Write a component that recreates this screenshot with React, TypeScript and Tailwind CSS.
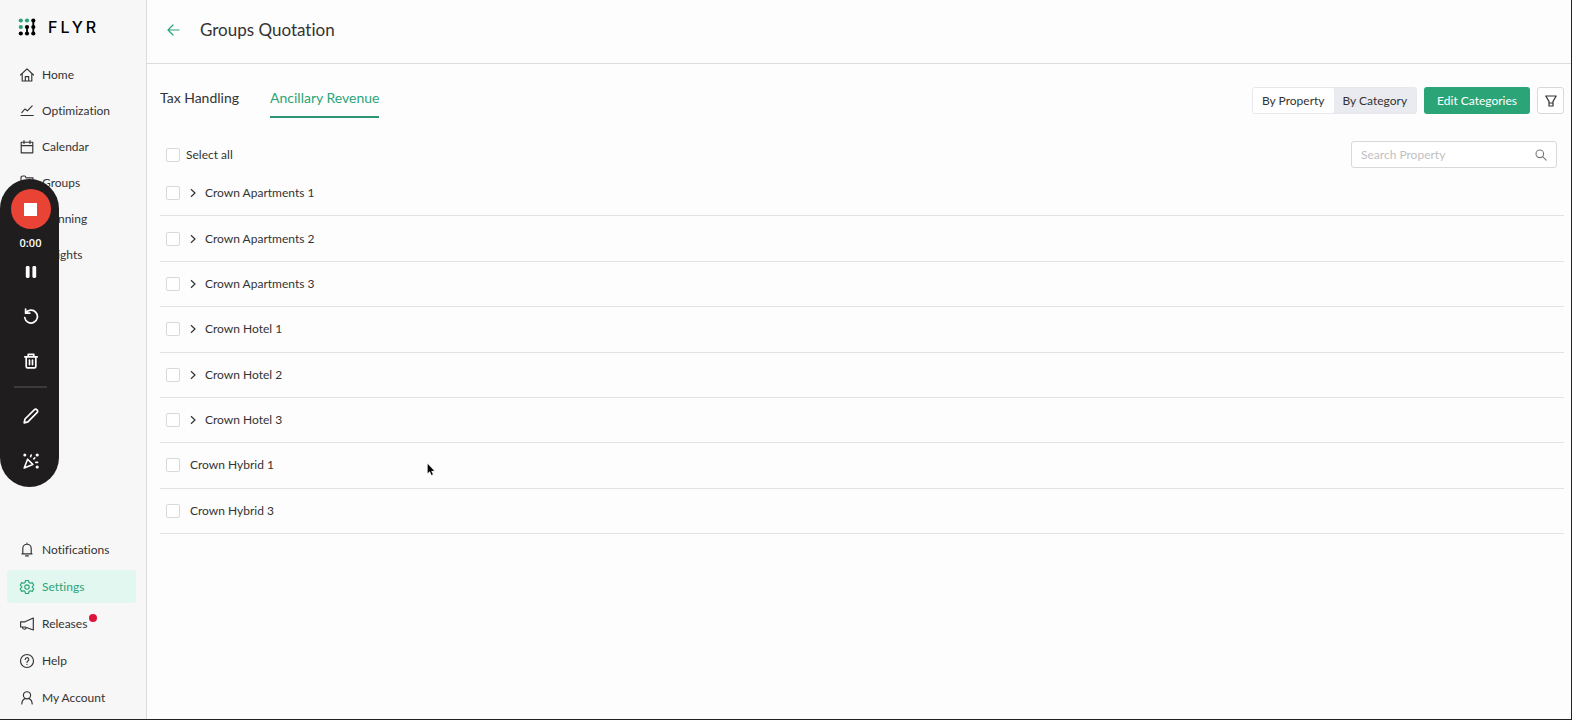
import { type ReactNode, useState } from 'react';

type NavItem = {
    label: string;
    icon: ReactNode;
    active?: boolean;
    badge?: boolean;
};

type Property = {
    name: string;
    expandable: boolean;
};

function LineIcon({ children }: { children: ReactNode }) {
    return (
        <svg viewBox="0 0 16 16" className="size-4 shrink-0" fill="none" stroke="currentColor" strokeWidth="1.15" strokeLinejoin="round" strokeLinecap="round" aria-hidden="true">
            {children}
        </svg>
    );
}

const mainNav: NavItem[] = [
    {
        label: 'Home',
        icon: <LineIcon><path d="M1.5 8 8 1.9 14.5 8M3.2 6.8v7.2h9.6V6.8M6.3 14V9.6h3.4V14" /></LineIcon>,
    },
    {
        label: 'Optimization',
        icon: <LineIcon><path d="M2 12.5h12.3M2.8 9.6l3-3.6 2.6 1.8 4.8-5" /></LineIcon>,
    },
    {
        label: 'Calendar',
        icon: <LineIcon><path d="M2.2 3.2h11.6v10.6H2.2zM2.2 6.6h11.6M5 1.6v3M11 1.6v3" /></LineIcon>,
    },
    {
        label: 'Groups',
        icon: <LineIcon><path d="M2 13.5V3Q2 1 4 1h1.6q1 0 1.4 1.800h7v10.700z" /></LineIcon>,
    },
    {
        label: 'Planning',
        icon: <LineIcon><path d="M2 2v12h12M5 11V8M8.5 11V5M12 11V7" /></LineIcon>,
    },
    {
        label: 'Insights',
        icon: <LineIcon><path d="M2 2v12h12M4 10l3-3 2 2 4-5" /></LineIcon>,
    },
];

const footerNav: NavItem[] = [
    {
        label: 'Notifications',
        icon: <LineIcon><path d="M8 1v1.2M3.8 11.8V6.4a4.2 4.2 0 0 1 8.4 0v5.4M2.9 11.8h10.2M6.6 13.9h2.8" /></LineIcon>,
    },
    {
        label: 'Settings',
        active: true,
        icon: (
            <LineIcon>
                <path d="M6.5 1.5h3l.5 2 1.3.8 2-.7 1.5 2.6-1.5 1.4v.8l1.5 1.4-1.5 2.6-2-.7-1.3.8-.5 2h-3l-.5-2-1.3-.8-2 .7-1.5-2.6 1.5-1.4v-.8L1.2 6.2l1.5-2.6 2 .7L6 3.5z" />
                <circle cx="8" cy="8" r="2.2" />
            </LineIcon>
        ),
    },
    {
        label: 'Releases',
        badge: true,
        icon: <LineIcon><path d="M14.3 2v12L6 11H1.6V5.8H6zM3.2 11q.4 2.2 2.4 2.2 1.3 0 1.6-1.6" /></LineIcon>,
    },
    {
        label: 'Help',
        icon: (
            <LineIcon>
                <circle cx="8" cy="8" r="6.5" />
                <path d="M6.2 6.5a1.8 1.8 0 1 1 2.6 1.6Q8 8.5 8 9.4M8 11.3v.1" />
            </LineIcon>
        ),
    },
    {
        label: 'My Account',
        icon: (
            <LineIcon>
                <circle cx="8" cy="5.3" r="3.6" />
                <path d="M2.8 14q.2-4.400 3.600-5.600M13.200 14q-.2-4.400-3.600-5.600" />
            </LineIcon>
        ),
    },
];

const properties: Property[] = [
    { name: 'Crown Apartments 1', expandable: true },
    { name: 'Crown Apartments 2', expandable: true },
    { name: 'Crown Apartments 3', expandable: true },
    { name: 'Crown Hotel 1', expandable: true },
    { name: 'Crown Hotel 2', expandable: true },
    { name: 'Crown Hotel 3', expandable: true },
    { name: 'Crown Hybrid 1', expandable: false },
    { name: 'Crown Hybrid 3', expandable: false },
];

const checkboxClass = 'size-[14px] shrink-0 appearance-none rounded-[2px] border border-[#d9d9db] bg-white checked:border-[#2ba578] checked:bg-[#2ba578]';

function NavLink({ item }: { item: NavItem }) {
    return (
        <a
            href="#"
            aria-current={item.active ? 'page' : undefined}
            className={
                item.active
                    ? 'flex h-[33px] items-center gap-[7px] rounded-[3px] bg-[#e2f7f0] pl-3 text-[#2ba578]'
                    : 'flex h-[33px] items-center gap-[7px] rounded-[3px] pl-3 text-[#333]'
            }
        >
            {item.icon}
            <span className="relative">
                {item.label}
                {item.badge && <span className="absolute top-0 -right-[10px] size-2 rounded-full bg-[#dc143c]" />}
            </span>
        </a>
    );
}

function Logo() {
    return (
        <div className="flex h-[54px] items-center gap-3 pl-[18px] text-black">
            <svg viewBox="0 0 18 18" className="size-[18px]" aria-hidden="true">
                <g fill="#2ba578">
                    <circle cx="2.8" cy="2.5" r="2.1" />
                    <circle cx="9" cy="2.5" r="2.1" />
                    <circle cx="2.8" cy="9" r="2.1" />
                </g>
                <path d="M15.3 2.5v13M9 9v6.5" stroke="#000" strokeWidth="1.8" />
                <circle cx="15.3" cy="2.5" r="2.1" />
                <circle cx="9" cy="9" r="2.1" />
                <circle cx="15.3" cy="9" r="2.1" />
                <circle cx="2.8" cy="15.5" r="2.1" />
                <circle cx="9" cy="15.5" r="2.1" />
                <circle cx="15.3" cy="15.5" r="2.1" />
            </svg>
            <span className="font-[Inter,sans-serif] text-[16px] font-medium tracking-[3px]">FLYR</span>
        </div>
    );
}

function RecorderBar() {
    const buttonClass = 'flex h-[45px] w-full items-center justify-center';

    return (
        <div className="fixed top-[179px] left-0 flex h-[308px] w-[59px] flex-col items-center rounded-full bg-[#1f1d1e] pt-[10px] pl-[2px] text-white">
            <button type="button" aria-label="Stop" className="flex size-10 shrink-0 items-center justify-center rounded-full bg-[#e84335]">
                <span className="size-[13px] bg-white" />
            </button>
            <span className="mt-[6px] font-['Open_Sans',sans-serif] text-[11px] leading-4 font-semibold">0:00</span>
            <button type="button" aria-label="Pause" className="flex h-[42px] w-full items-center justify-center">
                <svg viewBox="0 0 12 12" className="size-3" fill="currentColor" aria-hidden="true">
                    <rect x=".8" width="3.8" height="12" rx="1.4" />
                    <rect x="7.4" width="3.8" height="12" rx="1.4" />
                </svg>
            </button>
            <button type="button" aria-label="Restart" className={buttonClass}>
                <svg viewBox="0 0 16 16" className="size-4" fill="none" stroke="currentColor" strokeWidth="1.7" strokeLinecap="round" strokeLinejoin="round" aria-hidden="true">
                    <path d="M2.600 1v4.200h4.200M2.600 5.200A6.400 6.400 0 1 1 1.700 9.500" />
                </svg>
            </button>
            <button type="button" aria-label="Delete" className={buttonClass}>
                <svg viewBox="0 0 16 16" className="size-4" fill="none" stroke="currentColor" strokeWidth="1.7" strokeLinecap="round" strokeLinejoin="round" aria-hidden="true">
                    <path d="M1.800 3.800h12.400M5.200 3.500V1.400h5.600v2.100M3.200 4v9.400q0 1.400 1.400 1.400h6.800q1.400 0 1.400-1.400V4M6.500 7v4.600M9.500 7v4.600" />
                </svg>
            </button>
            <hr className="mt-[3px] mb-[5px] w-[33px] border-t-2 border-[#3c3a3b]" />
            <button type="button" aria-label="Draw" className={buttonClass}>
                <svg viewBox="0 0 16 16" className="size-4" fill="none" stroke="currentColor" strokeWidth="1.7" strokeLinecap="round" strokeLinejoin="round" aria-hidden="true">
                    <path d="M1.200 14.800l.8-3.800 9.200-9.200q1.500-1.200 2.800 0 1.300 1.400 0 2.900L4.900 13.900z" />
                </svg>
            </button>
            <button type="button" aria-label="Celebrate" className={buttonClass}>
                <svg viewBox="0 0 16 16" className="size-4" fill="none" stroke="currentColor" strokeWidth="1.6" strokeLinecap="round" strokeLinejoin="round" aria-hidden="true">
                    <path d="M4.600 6.200l5.200 5.200-8.600 3.600zM7.600 3.600l.6-1.600M10.800 6l1-1.200M12.800 9.400h1.800" />
                    <g fill="currentColor" stroke="none">
                        <circle cx="1.8" cy="2" r="1.5" />
                        <circle cx="14.2" cy="2" r="1.6" />
                        <circle cx="14.2" cy="14" r="1.6" />
                    </g>
                </svg>
            </button>
        </div>
    );
}

export default function GroupsQuotationPage() {
    const [search, setSearch] = useState('');

    return (
        <div className="flex min-h-screen border-r border-b border-[#222] bg-[#fdfdfd] font-[Lato,sans-serif] text-[12px] leading-5 text-[#333] [font-variant-ligatures:none]">
            <aside className="flex w-[147px] shrink-0 flex-col border-r border-[#dcdcde] bg-[#f7f7f7]">
                <Logo />
                <nav aria-label="Main" className="mt-1 flex flex-col gap-[3px] pr-[10px] pl-[7px]">
                    {mainNav.map((item) => <NavLink key={item.label} item={item} />)}
                </nav>
                <nav aria-label="Account" className="mt-auto mb-[5px] flex flex-col gap-1 pr-[10px] pl-[7px]">
                    {footerNav.map((item) => <NavLink key={item.label} item={item} />)}
                </nav>
            </aside>

            <main className="min-w-0 flex-1">
                <header className="flex h-16 items-center gap-5 border-b border-[#dcdcde] pb-1 pl-5">
                    <a href="#" aria-label="Back" className="text-[#2ba578]">
                        <svg viewBox="0 0 13 13" className="size-[13px]" fill="none" stroke="currentColor" strokeWidth="1.2" strokeLinecap="round" strokeLinejoin="round" aria-hidden="true">
                            <path d="M12 7H1.2M6 2 1 7l5 5" />
                        </svg>
                    </a>
                    <h1 className="text-[17px] leading-6">Groups Quotation</h1>
                </header>

                <div className="pr-[7px] pl-[13px]">
                    <div className="flex items-start justify-between pt-[23px]">
                        <div role="tablist" className="flex gap-[31px] text-[14px]">
                            <button type="button" role="tab" aria-selected="false" className="h-[31px] border-b-2 border-transparent pb-2">Tax Handling</button>
                            <button type="button" role="tab" aria-selected="true" className="h-[31px] border-b-2 border-[#2f9576] pb-2 text-[#2ba578]">Ancillary Revenue</button>
                        </div>
                        <div className="flex h-[27px] gap-[7px]">
                            <div className="flex rounded-[3px] border border-[#e6e8ec] bg-[#e9ebf0]">
                                <button type="button" aria-pressed="true" className="rounded-[2px] bg-white px-[9px]">By Property</button>
                                <button type="button" aria-pressed="false" className="px-[9px]">By Category</button>
                            </div>
                            <button type="button" className="rounded-[3px] bg-[#2ba578] px-[13px] text-white">Edit Categories</button>
                            <button type="button" aria-label="Filter" className="flex w-[27px] items-center justify-center rounded-[3px] border border-[#d9d9d9] bg-white">
                                <svg viewBox="0 0 12 12" className="size-3" fill="none" stroke="currentColor" strokeWidth="1.2" strokeLinejoin="round" aria-hidden="true">
                                    <path d="M.8 1h10.400L8 6.400V11H4V6.400zM4 8h4" />
                                </svg>
                            </button>
                        </div>
                    </div>

                    <div className="mt-[23px] flex items-center justify-between pr-[7px] pl-[6px]">
                        <label className="flex items-center gap-[6px]">
                            <input type="checkbox" className={checkboxClass} />
                            Select all
                        </label>
                        <div className="relative">
                            <input
                                type="text"
                                aria-label="Search Property"
                                placeholder="Search Property"
                                value={search}
                                onChange={(e) => setSearch(e.target.value)}
                                className="h-[27px] w-[206px] rounded-[3px] border border-[#d9d9d9] bg-white pr-7 pl-[9px] placeholder:text-[#bfbfbf]"
                            />
                            <svg viewBox="0 0 12 12" className="absolute top-2 right-[10px] size-3 text-[#777]" fill="none" stroke="currentColor" strokeWidth="1.1" strokeLinecap="round" aria-hidden="true">
                                <circle cx="4.8" cy="4.8" r="3.8" />
                                <path d="M7.6 7.6l3.600 3.600" />
                            </svg>
                        </div>
                    </div>

                    <ul className="mt-[3px] grid min-h-[363px] auto-rows-fr">
                        {properties
                            .filter((property) => property.name.toLowerCase().includes(search.toLowerCase()))
                            .map((property) => (
                                <li key={property.name} className="flex items-center gap-[10px] border-b border-[#e2e2e4] pl-[6px]">
                                    <input type="checkbox" aria-label={property.name} className={checkboxClass} />
                                    {property.expandable ? (
                                        <button type="button" aria-expanded="false" className="flex items-center gap-2">
                                            <svg viewBox="0 0 7 10" className="h-[10px] w-[7px]" fill="none" stroke="currentColor" strokeWidth="1.2" aria-hidden="true">
                                                <path d="M1 1.200 5 5 1 8.800" />
                                            </svg>
                                            {property.name}
                                        </button>
                                    ) : (
                                        <span>{property.name}</span>
                                    )}
                                </li>
                            ))}
                    </ul>
                </div>
            </main>

            <RecorderBar />

            {/* Mouse pointer */}
            <svg viewBox="0 0 8 13" className="pointer-events-none fixed top-[463px] left-[427px] h-[13px] w-2" aria-hidden="true">
                <path d="M.5.500v10l2.300-2 1.600 3.800 1.700-.7-1.600-3.600h3z" fill="#000" stroke="#fff" strokeWidth=".3" />
            </svg>
        </div>
    );
}
